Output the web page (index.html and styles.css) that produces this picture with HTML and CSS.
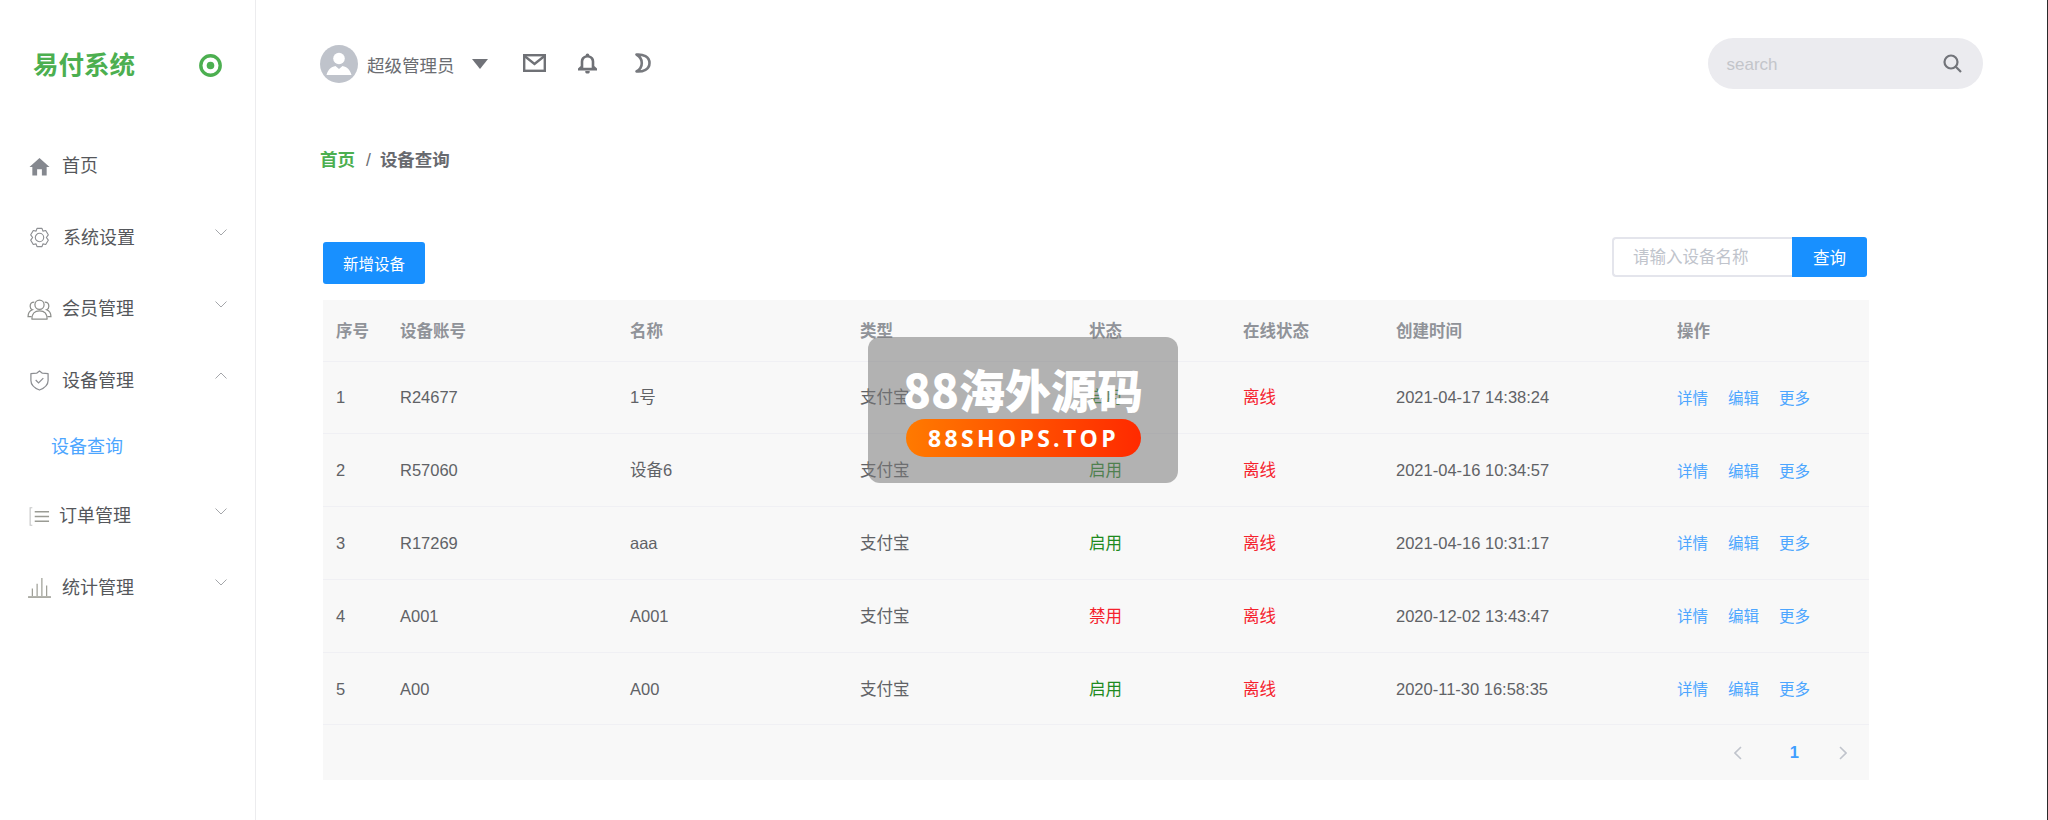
FILE: index.html
```html
<!DOCTYPE html>
<html lang="zh-CN">
<head>
<meta charset="utf-8">
<title>设备查询</title>
<link rel="stylesheet" href="styles.css">
</head>
<body>
<div class="app">
  <aside class="sidebar">
    <div class="logo">
      <span class="logo-text">易付系统</span>
      <svg class="logo-icon" viewBox="0 0 23 23"><circle cx="11.5" cy="11.5" r="9.7" fill="none" stroke="#4caf50" stroke-width="3.4"/><circle cx="11.5" cy="11.5" r="3.8" fill="#4caf50"/></svg>
    </div>
    <nav class="menu">
      <div class="menu-item">
        <svg class="mi" viewBox="0 0 22 20"><path d="M11 1 L0.5 10.5 H3.5 V19.5 H8.5 V13 H13.5 V19.5 H18.5 V10.5 H21.5 Z" fill="#85888f"/></svg>
        <span class="ml">首页</span>
      </div>
      <div class="menu-item">
        <svg class="mi mi-gear" viewBox="0 0 22 22" fill="none" stroke="#8c8e92" stroke-width="1.2"><path d="M8.4 1.5 H13.6 L14.6 4.3 L17.5 3.7 L20.2 8.2 L18.2 11 L20.2 13.8 L17.5 18.3 L14.6 17.7 L13.6 20.5 H8.4 L7.4 17.7 L4.5 18.3 L1.8 13.8 L3.8 11 L1.8 8.2 L4.5 3.7 L7.4 4.3 Z" stroke-linejoin="round"/><circle cx="11" cy="11" r="4.4"/></svg>
        <span class="ml">系统设置</span>
        <svg class="chev" viewBox="0 0 12 7"><path d="M0.5 0.5 L6 6 L11.5 0.5"/></svg>
      </div>
      <div class="menu-item">
        <svg class="mi mi-wide" viewBox="0 0 26 22" fill="none" stroke="#8c8e8a" stroke-width="1.3"><circle cx="13" cy="6" r="4.8"/><path d="M5 21 C5 15.5 8 12.500 13 12.500 C18 12.500 21 15.500 21 21 Z" stroke-linejoin="round"/><path d="M7.500 3.200 C4.800 3.200 3.200 5.200 3.200 7.500 C3.200 9.300 4.200 10.700 5.600 11.300 C2.800 12.300 1 14.600 1 18.500 H4.800"/><path d="M18.500 3.200 C21.200 3.200 22.800 5.200 22.800 7.500 C22.800 9.300 21.800 10.700 20.400 11.300 C23.200 12.300 25 14.600 25 18.500 H21.200"/></svg>
        <span class="ml">会员管理</span>
        <svg class="chev" viewBox="0 0 12 7"><path d="M0.5 0.5 L6 6 L11.5 0.5"/></svg>
      </div>
      <div class="menu-item">
        <svg class="mi" viewBox="0 0 22 22" fill="none" stroke="#8c8e92" stroke-width="1.300"><path d="M11 1 L14 3.300 L20 3.800 V11 C20 15.500 16 19 11 21 C6 19 2 15.500 2 11 V3.800 L8 3.300 Z" stroke-linejoin="round"/><path d="M7 10.500 L10 13.500 L15 8.500"/></svg>
        <span class="ml">设备管理</span>
        <svg class="chev" viewBox="0 0 12 7"><path d="M0.500 6.500 L6 1 L11.500 6.500"/></svg>
      </div>
      <div class="menu-sub">设备查询</div>
      <div class="menu-item menu-item-order">
        <svg class="mi" viewBox="0 0 22 20" fill="none" stroke="#9a9b94" stroke-width="1.600"><path d="M3.500 0.800 H1.200 V19.200 H3.500" stroke="#c5c6c6" stroke-width="1.200"/><path d="M6 5 H21 M6 10 H21 M6 15 H21"/></svg>
        <span class="ml">订单管理</span>
        <svg class="chev" viewBox="0 0 12 7"><path d="M0.500 0.500 L6 6 L11.500 0.500"/></svg>
      </div>
      <div class="menu-item">
        <svg class="mi mi-chart" viewBox="0 0 24 22" fill="none" stroke="#97988f" stroke-width="1.200"><path d="M4.500 20 V12 M9.500 20 V7 M14.500 20 V1 M19.500 20 V9"/><path d="M0 21 H24" stroke-width="1.600"/></svg>
        <span class="ml">统计管理</span>
        <svg class="chev" viewBox="0 0 12 7"><path d="M0.500 0.500 L6 6 L11.500 0.500"/></svg>
      </div>
    </nav>
  </aside>

  <main class="main">
    <header class="topbar">
      <div class="user">
        <svg class="avatar" viewBox="0 0 38 38"><circle cx="19" cy="19" r="19" fill="#bfc3cb"/><circle cx="19" cy="13.500" r="5.800" fill="#fff"/><path d="M6.500 30 C8 24.500 11 22 15.500 21 L19 24 L22.500 21 C27 22 30 24.500 31.500 30 Z" fill="#fff"/></svg>
        <span class="user-name">超级管理员</span>
        <svg class="caret" viewBox="0 0 16 10"><path d="M0 0 H16 L8 10 Z" fill="#707278"/></svg>
      </div>
      <svg class="ti ti-mail" viewBox="0 0 23 18" fill="none" stroke="#6f7176" stroke-width="2.400"><rect x="1.200" y="1.200" width="20.600" height="15.600"/><path d="M1.500 2 L11.500 10 L21.500 2"/></svg>
      <svg class="ti ti-bell" viewBox="0 0 20 21"><path d="M10 0.500 C8.800 0.500 8.300 1.300 8.300 2.300 C5 3.200 3.200 5.500 3.200 8.500 V13 L0.500 15.500 V17.500 H19.500 V15.500 L16.800 13 V8.500 C16.800 5.500 15 3.200 11.700 2.300 C11.700 1.300 11.200 0.500 10 0.500 Z M5.800 14.800 L5.800 8.500 C5.800 6 7.800 4.400 10 4.400 C12.200 4.400 14.200 6 14.200 8.500 V14.800 Z" fill="#6f7176" fill-rule="evenodd"/><path d="M7.800 18 H12.200 V19 C12.200 20 11.200 20.500 10 20.500 C8.800 20.500 7.800 20 7.800 19 Z" fill="#6f7176"/></svg>
      <svg class="ti ti-moon" viewBox="0 0 16 20" fill="none" stroke="#77797e" stroke-width="2.600"><path d="M1.500 1.500 C8 1 14.500 3.500 14.500 10 C14.500 16.500 8 19 1.500 18.500 C5 16.500 6.800 13.500 6.800 10 C6.800 6.500 5 3.500 1.500 1.500 Z" stroke-linejoin="round"/></svg>
      <div class="search">
        <span class="search-ph">search</span>
        <svg class="search-ic" viewBox="0 0 19 19" fill="none" stroke="#72747a" stroke-width="2.200"><circle cx="8" cy="8" r="6.500"/><path d="M12.800 12.800 L18 18"/></svg>
      </div>
    </header>

    <div class="crumb"><b class="crumb-home">首页</b><span class="crumb-sep">/</span><b class="crumb-cur">设备查询</b></div>

    <section class="toolbar">
      <button class="btn btn-add">新增设备</button>
      <div class="query">
        <div class="query-input">请输入设备名称</div>
        <button class="btn btn-query">查询</button>
      </div>
    </section>

    <section class="panel">
      <table class="grid">
        <colgroup>
          <col class="c1"><col class="c2"><col class="c3"><col class="c4"><col class="c5"><col class="c6"><col class="c7"><col class="c8">
        </colgroup>
        <thead>
          <tr><th>序号</th><th>设备账号</th><th>名称</th><th>类型</th><th>状态</th><th>在线状态</th><th>创建时间</th><th>操作</th></tr>
        </thead>
        <tbody>
          <tr><td>1</td><td>R24677</td><td>1号</td><td>支付宝</td><td class="on">启用</td><td class="off">离线</td><td>2021-04-17 14:38:24</td><td class="ops"><a>详情</a><a>编辑</a><a>更多</a></td></tr>
          <tr><td>2</td><td>R57060</td><td>设备6</td><td>支付宝</td><td class="on">启用</td><td class="off">离线</td><td>2021-04-16 10:34:57</td><td class="ops"><a>详情</a><a>编辑</a><a>更多</a></td></tr>
          <tr><td>3</td><td>R17269</td><td>aaa</td><td>支付宝</td><td class="on">启用</td><td class="off">离线</td><td>2021-04-16 10:31:17</td><td class="ops"><a>详情</a><a>编辑</a><a>更多</a></td></tr>
          <tr><td>4</td><td>A001</td><td>A001</td><td>支付宝</td><td class="off">禁用</td><td class="off">离线</td><td>2020-12-02 13:43:47</td><td class="ops"><a>详情</a><a>编辑</a><a>更多</a></td></tr>
          <tr><td>5</td><td>A00</td><td>A00</td><td>支付宝</td><td class="on">启用</td><td class="off">离线</td><td>2020-11-30 16:58:35</td><td class="ops"><a>详情</a><a>编辑</a><a>更多</a></td></tr>
        </tbody>
      </table>
      <div class="pager">
        <svg class="pg" viewBox="0 0 8 14"><path d="M7 1 L1 7 L7 13"/></svg>
        <span class="pg-num">1</span>
        <svg class="pg" viewBox="0 0 8 14"><path d="M1 1 L7 7 L1 13"/></svg>
      </div>
    </section>
  </main>

  <div class="stamp">
    <div class="stamp-title">88海外源码</div>
    <div class="stamp-pill">88SHOPS.TOP</div>
  </div>
</div>
</body>
</html>
```
FILE: styles.css
```css
* { box-sizing: border-box; }
html, body { margin: 0; padding: 0; }
body {
  background: #fff;
  font-family: "Liberation Sans", "Noto Sans CJK SC", sans-serif;
  color: #606266;
  overflow: hidden;
}
.app {
  position: relative;
  display: flex;
  width: 2048px;
  height: 820px;
  border-right: 1px solid #2a2a2a;
}

/* sidebar */
.sidebar {
  flex: none;
  width: 256px;
  border-right: 1px solid #ececee;
}
.logo {
  display: flex;
  align-items: center;
  justify-content: space-between;
  height: 130.5px;
  padding: 0 33px;
}
.logo-text { font-size: 25.5px; font-weight: 700; line-height: 30px; color: #4caf50; }
.logo-icon { width: 23px; height: 23px; }
.menu-item {
  display: flex;
  align-items: center;
  height: 71.5px;
  padding-left: 29px;
  font-size: 18px;
  line-height: 24px;
  color: #55575b;
  position: relative;
}
.mi { flex: none; width: 21px; height: 21px; margin-right: 12px; }
.mi-gear { margin-right: 13px; }
.mi-wide { width: 25px; margin-left: -2px; margin-right: 10px; }
.mi-chart { width: 23px; margin-left: -1px; margin-right: 11px; }
.menu-item-order .mi { margin-right: 9px; }
.chev {
  position: absolute;
  right: 28px;
  top: 27px;
  width: 12px;
  height: 7px;
  fill: none;
  stroke: #a4a6aa;
  stroke-width: 1;
}
.menu-sub {
  height: 64px;
  padding-left: 51px;
  font-size: 18px;
  line-height: 60px;
  color: #4da6ff;
}

/* main */
.main { flex: 1; padding-left: 64px; min-width: 0; }
.topbar {
  display: flex;
  align-items: center;
  height: 130px;
}
.user { display: flex; align-items: center; margin-top: -2px; }
.avatar { width: 38px; height: 38px; margin-right: 9px; }
.user-name { font-size: 17.5px; line-height: 24px; margin-top: 3px; color: #6b6d72; }
.caret { width: 16px; height: 10px; margin-left: 17px; }
.ti { flex: none; }
.ti-mail { width: 23px; height: 18px; margin-left: 35px; margin-top: -4px; }
.ti-bell { width: 21px; height: 21px; margin-left: 31px; margin-top: -4px; }
.ti-moon { width: 16px; height: 20px; margin-left: 37px; margin-top: -5px; }
.search {
  display: flex;
  align-items: center;
  justify-content: space-between;
  width: 275px;
  height: 51px;
  margin-top: -3px;
  margin-left: 1057px;
  padding: 0 21px 0 19px;
  border-radius: 26px;
  background: #ebebef;
}
.search-ph { font-size: 17px; line-height: 22px; margin-top: 3px; color: #c3c5ca; }
.search-ic { width: 19px; height: 19px; }

.crumb {
  display: flex;
  align-items: center;
  height: 60px;
  font-size: 17.5px;
  line-height: 24px;
}
.crumb-home { color: #4caf50; }
.crumb-sep { margin: 0 9px 0 11px; color: #6b6d72; }
.crumb-cur { color: #686a6f; }

.toolbar {
  display: flex;
  align-items: flex-start;
  justify-content: space-between;
  width: 1547px;
  height: 110px;
  padding: 47px 0 0 3px;
}
.btn {
  border: 0;
  border-radius: 3px;
  background: #1890ff;
  color: #fff;
  font-family: inherit;
  cursor: pointer;
  padding: 0;
}
.btn-add { width: 102px; height: 42px; margin-top: 5px; font-size: 15.5px; }
.query { display: flex; }
.query-input {
  width: 180px;
  height: 40px;
  border: 2px solid #e4e5ec;
  border-right: 0;
  border-radius: 4px 0 0 4px;
  padding-left: 19px;
  font-size: 16.5px;
  line-height: 36px;
  color: #c0c4cc;
  background: #fff;
}
.btn-query { width: 75px; height: 40px; font-size: 16.5px; border-radius: 0 3px 3px 0; }

/* table */
.panel {
  width: 1546px;
  margin-left: 3px;
  background: #f8f8f8;
}
.grid { width: 1546px; border-collapse: collapse; table-layout: fixed; }
.c1 { width: 64px; } .c2 { width: 230px; } .c3 { width: 230px; } .c4 { width: 229px; }
.c5 { width: 154px; } .c6 { width: 153px; } .c7 { width: 281px; } .c8 { width: 205px; }
.grid th, .grid td { padding: 0 0 0 13px; text-align: left; border-bottom: 1px solid #f0f0f4; white-space: nowrap; line-height: 22px; }
.grid th { height: 61px; padding-top: 2px; font-size: 16.5px; font-weight: 700; color: #909399; }
.grid td { height: 72.8px; font-size: 16.5px; color: #606266; }
.grid td.on { color: #1e8a1e; }
.grid td.off { color: #f5222d; }
.grid td.ops { padding-top: 3px; font-size: 15.5px; color: #4da6ff; }
.ops a { margin-right: 20px; }
.pager {
  display: flex;
  align-items: center;
  justify-content: flex-end;
  height: 55px;
  padding-right: 22px;
}
.pg { width: 8px; height: 14px; fill: none; stroke: #c0c4cc; stroke-width: 1.600; }
.pg-num { margin: 0 40px 0 48px; font-size: 16.5px; font-weight: 700; color: #409eff; }

/* watermark */
.stamp {
  position: absolute;
  left: 868px;
  top: 337px;
  width: 310px;
  height: 146px;
  border-radius: 12px;
  background: rgba(120, 120, 120, .55);
  text-align: center;
}
.stamp-title {
  margin-top: 20px;
  font-family: "Noto Sans CJK SC", sans-serif;
  font-size: 46px;
  font-weight: 900;
  line-height: 62px;
  color: #fff;
  white-space: nowrap;
}
.stamp-pill {
  width: 235px;
  height: 38px;
  margin: 0 auto 0 38px;
  border-radius: 19px;
  background: linear-gradient(90deg, #ff7a00, #ff2a00);
  font-family: "Open Sans", sans-serif;
  font-size: 23px;
  font-weight: 700;
  line-height: 38px;
  letter-spacing: 3.3px;
  color: #fff;
}
```
